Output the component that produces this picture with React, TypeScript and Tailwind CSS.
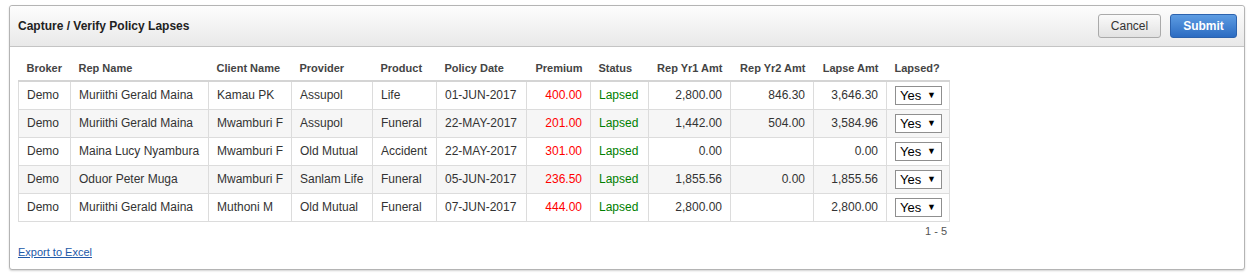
import React from "react";

type Row = {
  broker: string;
  rep: string;
  client: string;
  provider: string;
  product: string;
  date: string;
  premium: string;
  status: string;
  yr1: string;
  yr2: string;
  lapse: string;
};

const rows: Row[] = [
  { broker: "Demo", rep: "Muriithi Gerald Maina", client: "Kamau PK", provider: "Assupol", product: "Life", date: "01-JUN-2017", premium: "400.00", status: "Lapsed", yr1: "2,800.00", yr2: "846.30", lapse: "3,646.30" },
  { broker: "Demo", rep: "Muriithi Gerald Maina", client: "Mwamburi F", provider: "Assupol", product: "Funeral", date: "22-MAY-2017", premium: "201.00", status: "Lapsed", yr1: "1,442.00", yr2: "504.00", lapse: "3,584.96" },
  { broker: "Demo", rep: "Maina Lucy Nyambura", client: "Mwamburi F", provider: "Old Mutual", product: "Accident", date: "22-MAY-2017", premium: "301.00", status: "Lapsed", yr1: "0.00", yr2: "", lapse: "0.00" },
  { broker: "Demo", rep: "Oduor Peter Muga", client: "Mwamburi F", provider: "Sanlam Life", product: "Funeral", date: "05-JUN-2017", premium: "236.50", status: "Lapsed", yr1: "1,855.56", yr2: "0.00", lapse: "1,855.56" },
  { broker: "Demo", rep: "Muriithi Gerald Maina", client: "Muthoni M", provider: "Old Mutual", product: "Funeral", date: "07-JUN-2017", premium: "444.00", status: "Lapsed", yr1: "2,800.00", yr2: "", lapse: "2,800.00" },
];

const columns: { label: string; width: number; right?: boolean }[] = [
  { label: "Broker", width: 52 },
  { label: "Rep Name", width: 138 },
  { label: "Client Name", width: 83 },
  { label: "Provider", width: 81 },
  { label: "Product", width: 64 },
  { label: "Policy Date", width: 90 },
  { label: "Premium", width: 64, right: true },
  { label: "Status", width: 58 },
  { label: "Rep Yr1 Amt", width: 82, right: true },
  { label: "Rep Yr2 Amt", width: 83, right: true },
  { label: "Lapse Amt", width: 73, right: true },
  { label: "Lapsed?", width: 63 },
];

const td = "h-[28px] border border-[#dcdcdc] px-[8px] py-0 whitespace-nowrap";

function YesSelect() {
  return (
    <span className="inline-flex h-[19px] w-[47px] items-center justify-between border border-[#8f8f8f] bg-white pl-[4px] pr-[5px] text-[13px] leading-none text-black">
      <span>Yes</span>
      <span className="text-[9px]">▼</span>
    </span>
  );
}

export default function App() {
  return (
    <div className="h-[275px] w-[1255px] bg-white pl-[9px] pt-[5px] font-['Liberation_Sans',Arial,sans-serif] text-[12px] text-[#333]">
      <div className="h-[265px] w-[1236px] rounded-[3px] border border-[#b4b4b4] bg-white shadow-[0_1px_2px_rgba(0,0,0,0.18)]">
        <div className="flex h-[41px] items-center justify-between rounded-t-[3px] border-b border-[#c4c4c4] bg-gradient-to-b from-[#fdfdfd] to-[#e9e9e9] pl-[8px] pr-[7px]">
          <h1 className="text-[12px] font-bold text-[#222]">Capture / Verify Policy Lapses</h1>
          <div className="flex gap-[9px]">
            <button className="h-[24px] w-[63px] rounded-[3px] border border-[#aaaaaa] bg-gradient-to-b from-[#fafafa] to-[#e2e2e2] text-[12px] text-[#333]">
              Cancel
            </button>
            <button className="h-[24px] w-[67px] rounded-[3px] border border-[#2c62ad] bg-gradient-to-b from-[#5d9ce2] to-[#2c6cc2] text-[12px] font-bold text-white">
              Submit
            </button>
          </div>
        </div>
        <div className="pl-[8px] pt-[10px]">
          <table className="table-fixed border-collapse" style={{ width: 931 }}>
            <colgroup>
              {columns.map((c) => (
                <col key={c.label} style={{ width: c.width }} />
              ))}
            </colgroup>
            <thead>
              <tr className="h-[24px] border-b-2 border-[#d4d4d4]">
                {columns.map((c) => (
                  <th
                    key={c.label}
                    className={`px-[8px] py-0 text-[11px] font-bold whitespace-nowrap text-[#444] ${c.right ? "text-right" : "text-left"}`}
                  >
                    {c.label}
                  </th>
                ))}
              </tr>
            </thead>
            <tbody>
              {rows.map((r, i) => (
                <tr key={i} className={i % 2 === 1 ? "bg-[#f6f6f6]" : "bg-white"}>
                  <td className={td}>{r.broker}</td>
                  <td className={td}>{r.rep}</td>
                  <td className={td}>{r.client}</td>
                  <td className={td}>{r.provider}</td>
                  <td className={td}>{r.product}</td>
                  <td className={td}>{r.date}</td>
                  <td className={`${td} text-right text-[#ff0000]`}>{r.premium}</td>
                  <td className={`${td} text-[#008000]`}>{r.status}</td>
                  <td className={`${td} text-right`}>{r.yr1}</td>
                  <td className={`${td} text-right`}>{r.yr2}</td>
                  <td className={`${td} text-right`}>{r.lapse}</td>
                  <td className={`${td} pl-[8px]`}>
                    <YesSelect />
                  </td>
                </tr>
              ))}
            </tbody>
          </table>
          <div className="flex pt-[1px] text-[11px] text-[#555]" style={{ width: 929 }}>
            <span className="ml-auto">1 - 5</span>
          </div>
          <div className="pt-[4px]">
            <a href="#" className="text-[11px] text-[#2159a8] underline">
              Export to Excel
            </a>
          </div>
        </div>
      </div>
    </div>
  );
}
